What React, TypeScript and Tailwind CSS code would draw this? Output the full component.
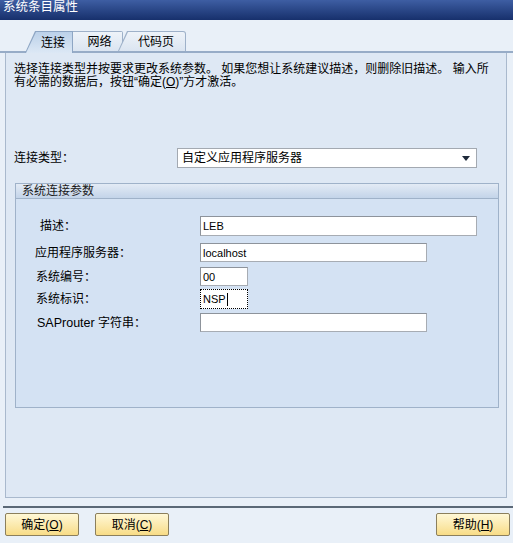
const FONT = "font-['Liberation_Sans','Noto_Sans_CJK_SC',sans-serif]";

interface FieldProps {
  label:   React.ReactNode;
  labelPl: string;
  value:   string;
  width:   string;
  height:  string;
  mt:      string;
  focused?: boolean;
}

function Field({ label, labelPl, value, width, height, mt, focused }: FieldProps) {
  return (
    <div className={`flex items-center ${mt}`}>
      <div className={`w-[184px] text-[12px] leading-[14px] text-black ${labelPl}`}>{label}</div>
      <div
        className={`${width} ${height} bg-white flex items-center pl-[2px] text-[11px] text-black ${
          focused ? "border border-dotted border-black" : "border border-[#a7acb3] border-t-[#8d939b] border-l-[#8d939b]"
        }`}
      >
        <span className="leading-[12px]">{value}</span>
        {focused && <span className="w-px h-[13px] bg-black ml-px" />}
      </div>
    </div>
  );
}

function Button({ label, hotkey }: { label: string; hotkey: string }) {
  return (
    <button className="w-[74px] h-[23px] rounded-[2px] border border-[#8b7f5c] bg-gradient-to-b from-[#fff8d6] to-[#f8dc86] text-[12px] leading-[14px] text-black flex items-center justify-center">
      {label}(<span className="underline">{hotkey}</span>)
    </button>
  );
}

export default function App() {
  return (
    <div className={`w-[513px] h-[543px] overflow-hidden bg-[#e9f0f8] flex flex-col ${FONT}`}>
      {/* Title bar */}
      <div className="h-[20px] shrink-0 bg-gradient-to-b from-[#3e5ea3] to-[#17306c] pl-[3px] pt-px text-white text-[12.5px] leading-[13px]">
        系统条目属性
      </div>

      {/* Tab strip */}
      <div className="h-[33px] shrink-0 flex items-end pl-[25px] border-b-2 border-[#97acc7]">
        {/* 连接 (selected) */}
        <div className="relative z-10 h-[22px] -mb-[2px] w-[48px] bg-[#8ea6c4] [clip-path:polygon(10px_0,100%_0,100%_100%,0_100%)]">
          <div className="absolute inset-x-[1px] top-[1px] bottom-0 bg-gradient-to-b from-[#bcd1e9] to-[#dce8f5] [clip-path:polygon(10px_0,100%_0,100%_100%,0_100%)] flex items-center justify-center pl-[8px] pt-[1px] text-[12px] leading-[14px] text-black">
            连接
          </div>
        </div>
        {/* 网络 */}
        <div className="relative h-[20px] w-[50px] bg-[#9eb1c9] rounded-tr-[2px]">
          <div className="absolute inset-x-0 right-[1px] top-[1px] bottom-0 bg-gradient-to-b from-[#eef3f9] to-[#dbe5f1] flex items-center justify-center pl-[4px] text-[12px] leading-[14px] text-black">
            网络
          </div>
        </div>
        {/* 代码页 */}
        <div className="relative -ml-[5px] h-[20px] w-[68px] bg-[#9eb1c9] rounded-tr-[3px] [clip-path:polygon(9px_0,100%_0,100%_100%,0_100%)]">
          <div className="absolute left-[1px] right-[1px] top-[1px] bottom-0 rounded-tr-[2px] bg-gradient-to-b from-[#eef3f9] to-[#dbe5f1] [clip-path:polygon(9px_0,100%_0,100%_100%,0_100%)] flex items-center justify-center pl-[8px] text-[12px] leading-[14px] text-black">
            代码页
          </div>
        </div>
      </div>

      {/* Tab page */}
      <div className="ml-[5px] w-[502px] h-[445px] shrink-0 bg-[#dee8f4] border-x border-b border-[#a9b9cd] flex flex-col">
        <p className="mt-[10px] pl-[8px] text-[12px] leading-[13px] text-black whitespace-nowrap">
          选择连接类型并按要求更改系统参数。 如果您想让系统建议描述，则删除旧描述。 输入所
          <br />
          有必需的数据后，按钮“确定(<span className="underline">O</span>)”方才激活。
        </p>

        {/* Connection type */}
        <div className="mt-[59px] flex items-center">
          <div className="w-[171px] pl-[8px] text-[12px] leading-[14px] text-black">连接类型：</div>
          <div className="w-[300px] h-[20px] bg-white border border-[#a3a9b1] flex items-center justify-between pl-[4px] pr-[6px] text-[12px] leading-[14px] text-black">
            <span>自定义应用程序服务器</span>
            <svg width="8" height="5" viewBox="0 0 8 5">
              <path d="M0 0h8L4 5z" fill="#1e2a3a" />
            </svg>
          </div>
        </div>

        {/* Group box */}
        <div className="mt-[15px] ml-[9px] w-[484px] h-[225px] border border-[#9fb2c9] bg-[#d4e2f3] flex flex-col">
          <div className="h-[15px] shrink-0 border-b border-[#9fb2c9] bg-gradient-to-b from-[#e3ebf5] to-[#c3d4e9] pl-[6px] text-[12px] leading-[14px] text-[#1a1a1a]">
            系统连接参数
          </div>
          <Field label="描述：" labelPl="pl-[24px]" value="LEB" width="w-[277px]" height="h-[20px]" mt="mt-[17px]" />
          <Field label="应用程序服务器：" labelPl="pl-[19px]" value="localhost" width="w-[227px]" height="h-[19px]" mt="mt-[7px]" />
          <Field label="系统编号：" labelPl="pl-[20px]" value="00" width="w-[48px]" height="h-[19px]" mt="mt-[5px]" />
          <Field label="系统标识：" labelPl="pl-[20px]" value="NSP" width="w-[48px]" height="h-[20px]" mt="mt-[3px]" focused />
          <Field
            label={<><span className="text-[12.5px]">SAProuter</span> 字符串：</>}
            labelPl="pl-[21px]"
            value=""
            width="w-[227px]"
            height="h-[19px]"
            mt="mt-[4px]"
          />
        </div>
      </div>

      {/* Separator */}
      <div className="mt-[8px] ml-[3px] h-[2px] shrink-0 bg-[#5b6977]" />

      {/* Buttons */}
      <div className="mt-[5px] flex items-center pl-[5px] pr-[3px]">
        <Button label="确定" hotkey="O" />
        <div className="ml-[16px]">
          <Button label="取消" hotkey="C" />
        </div>
        <div className="ml-auto">
          <Button label="帮助" hotkey="H" />
        </div>
      </div>
    </div>
  );
}
